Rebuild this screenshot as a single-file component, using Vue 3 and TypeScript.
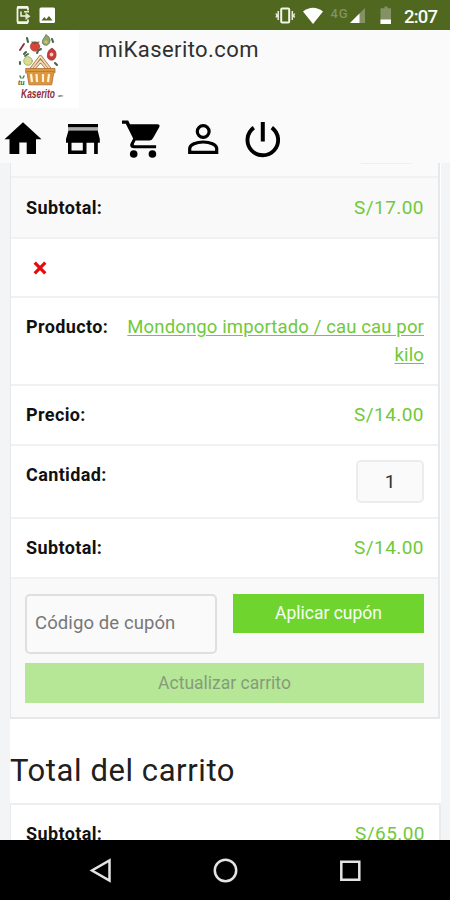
<script setup lang="ts">
interface CartRow {
  label: string
  value: string
  kind: 'price' | 'link' | 'qty' | 'remove'
  size: string
}

const rows: CartRow[] = [
  { label: 'Subtotal:', value: 'S/17.00', kind: 'price', size: 'shaded' },
  { label: '', value: '×', kind: 'remove', size: 'remove-row' },
  { label: 'Producto:', value: 'Mondongo importado / cau cau por kilo', kind: 'link', size: 'product' },
  { label: 'Precio:', value: 'S/14.00', kind: 'price', size: 'regular' },
  { label: 'Cantidad:', value: '1', kind: 'qty', size: 'quantity' },
  { label: 'Subtotal:', value: 'S/14.00', kind: 'price', size: 'regular' },
]
</script>

<template>
  <div class="screen">
    <div class="status">
      <svg width="60" height="30" viewBox="0 0 60 30">
        <rect x="17.500" y="7" width="10.500" height="16" rx="1.500" fill="none" stroke="#f4f6e8" stroke-width="1.800" />
        <path d="M17 7.500h11M17 22.500h11" stroke="#f4f6e8" stroke-width="2.600" />
        <path d="M26 10.500v9h4v-9z" fill="#506720" />
        <path d="M21 11.500v4.500h5" fill="none" stroke="#f4f6e8" stroke-width="1.500" />
        <path d="M25.500 12.500l5 3.800-5 3.700zM24 11h5v1.500h-5z" fill="#e4e8d5" />
        <path fill="#fff" fill-rule="evenodd" d="M41 7.500h12.500q1.500 0 1.500 1.500v12.500q0 1.500-1.500 1.500H41q-1.500 0-1.500-1.500V9q0-1.500 1.500-1.500zM41.500 20.500h11l-3.500-4.500-2.700 3.200-2-2.200z" />
      </svg>
      <div class="status-right">
        <svg width="170" height="30" viewBox="270 0 170 30">
          <rect x="281.200" y="8.500" width="8" height="14" rx="1" fill="none" stroke="#f2f5e9" stroke-width="2" />
          <path d="M278.200 11v9M276 13.500l1 2-1 2M292.300 11v9M294.600 13.500l-1 2 1 2" fill="none" stroke="#e9eddd" stroke-width="1.500" />
          <path d="M303 11.500Q313 4 323 11.500L313 24z" fill="#fff" />
          <text x="330.500" y="17.500" class="network" textLength="17">4G</text>
          <path d="M365 8v15h-15z" fill="#839164" />
          <path d="M359.500 13.500V23H350z" fill="#fff" />
          <path d="M382.500 8.200h2V6.500h3v1.700h3.500V24h-10.500V8.200z" fill="#839164" />
          <path d="M380.500 19.500H391V24h-10.500z" fill="#fff" />
          <text x="404" y="22.500" class="clock" textLength="34">2:07</text>
        </svg>
      </div>
    </div>

    <header class="header">
      <div class="brand">
        <div class="logo">
          <svg width="79" height="78" viewBox="0 30 79 78">
            <g stroke-linecap="round" stroke-linejoin="round">
              <path d="M24 44l-4 6" stroke="#8b3340" stroke-width="1.900" />
              <path d="M27 38l1 4M52 39l1 3M39 50l2-1M26 52l-2 2M20 62v2M55 63l2 2M37 53l1-2" stroke="#44684a" stroke-width="2.100" />
              <circle cx="35" cy="46.500" r="4.700" fill="#d8433c" stroke="#a34738" stroke-width=".7" />
              <path d="M32 42l3 1.500 4-1.500" fill="none" stroke="#48663f" stroke-width="1.200" />
              <path d="M46 35c-2 3-5 6-3 9 3 3 7 0 7-3 0-3-1-5-4-6z" fill="#94a76a" stroke="#5d7450" stroke-width=".8" />
              <circle cx="46" cy="42" r="1.700" fill="#d3bf76" />
              <path d="M52 48.500c-4 1-5 5-4.500 9 2 4 7 3 8 0 1.500-4 0-8-3.500-9z" fill="#c9393a" stroke="#8f3d3c" stroke-width=".8" />
              <circle cx="51.500" cy="54.500" r="1.900" fill="#f3c9b3" />
              <circle cx="28" cy="61" r="4.300" fill="#d9dc92" stroke="#96a85b" stroke-width=".8" />
              <path d="M25 56l3-2" fill="none" stroke="#4d7143" stroke-width="2" />
              <path d="M31 69l9.500-12.500L50 69M34.500 68l6-7 6 7" fill="none" stroke="#a8774f" stroke-width="3.200" />
              <path d="M31 69l9.500-12.500L50 69M34.500 68l6-7 6 7" fill="none" stroke="#f1ddb6" stroke-width="1.700" />
              <path d="M26 68.500h29v4.300h-1.300l-2 12H29l-2-12h-1z" fill="#dc963e" stroke="#ae6b2d" stroke-width=".8" />
              <path d="M31 74l1 8M36.500 74l.5 8M43 74v8M49 74l-1 8" stroke="#fff0d8" stroke-width="2.200" stroke-linecap="butt" />
              <path d="M27 71.500h27" stroke="#b9722e" stroke-width=".8" />
              <path d="M20 76l1 2M24 76l-1 2" stroke="#527c58" stroke-width="1.500" />
            </g>
            <text x="18" y="84.500" class="logo-small">tu</text>
            <text x="21" y="97.500" class="logo-name" textLength="34" lengthAdjust="spacingAndGlyphs">Kaserito</text>
            <text x="58" y="97" class="logo-domain" textLength="5">.com</text>
          </svg>
        </div>
        <div class="title">miKaserito.com</div>
      </div>
      <nav>
        <svg width="300" height="50" viewBox="0 115 300 50">
          <path d="M4.500 139.200L23 122.300l18.500 16.900H36V154H26.700V142.500h-7.400V154H9.500v-14.800z" />
          <path d="M68 124h30v3.500H68z" />
          <path fill="#a9aaa9" d="M68 127.500h30v3H68z" />
          <path fill-rule="evenodd" d="M68.500 130.500h29.200l2.100 8.500v3.700h-2V154h-3.700v-11.300h-7.600V154H68v-11.300h-2V139zM71.500 142.700v7.800h11.300v-7.800z" />
          <path d="M122 120.500h6.200l1.800 3.700h27.300q3.200 0 1.900 3l-6.400 11.400q-1.100 2-3.400 2h-13.800l-1.800 3.400q-.2 1.200.8 1.200h21.500v3H133.800c-3.300 0-4.400-2.800-3-5.200l2.400-4.600-7.400-14.700H122z" />
          <circle cx="133.700" cy="154" r="3.800" />
          <circle cx="152.400" cy="154" r="3.800" />
          <g fill="none" stroke="#000" stroke-width="3.200">
            <circle cx="203.200" cy="131.500" r="5.900" />
            <path d="M189.700 152.400v-3.900c0-4.200 7-6.500 13.500-6.500s13.500 2.300 13.500 6.500v3.900z" />
            <path d="M262.800 122v19.500" stroke-width="4" />
            <path d="M253.800 127.600a15.300 15.300 0 1 0 18 0" stroke-width="3.900" />
          </g>
        </svg>
      </nav>
    </header>

    <main class="content">
      <div class="page">
        <section class="cart">
          <div class="previous"><span class="previous-field"></span></div>
          <div v-for="(row, index) in rows" :key="index" class="row" :class="row.size">
            <span v-if="row.label" class="label">{{ row.label }}</span>
            <button v-if="row.kind === 'remove'" class="remove" aria-label="Eliminar">
              <svg width="14" height="14" viewBox="0 0 14 14"><path d="M1.700 1.700l10.600 10.600M12.300 1.700L1.700 12.300" stroke="#e60b0b" stroke-width="3.200" /></svg>
            </button>
            <span v-else :class="row.kind">{{ row.value }}</span>
          </div>
          <div class="actions">
            <div class="coupon">
              <input type="text" placeholder="Código de cupón" />
              <button class="button">Aplicar cupón</button>
            </div>
            <button class="button update" disabled>Actualizar carrito</button>
          </div>
        </section>
        <h2>Total del carrito</h2>
        <section class="totals">
          <span class="label">Subtotal:</span>
          <span class="price">S/65.00</span>
        </section>
      </div>
    </main>

    <footer class="navbar">
      <svg width="450" height="60" viewBox="0 840 450 60" fill="none" stroke="#e4e4e4" stroke-width="2.500">
        <path d="M109.500 860.500v20L92 870.500z" />
        <circle cx="225.500" cy="870.500" r="10.700" />
        <path d="M341.300 861.700h18v18h-18z" />
      </svg>
    </footer>
  </div>
</template>

<style>
body { margin: 0; }
</style>

<style scoped>
* { box-sizing: border-box; }
.screen { width: 450px; height: 900px; display: flex; flex-direction: column; overflow: hidden; font-family: Roboto, sans-serif; background: #f2f4f6; color: #111; }
svg { display: block; flex: none; }
.status { height: 30px; flex: none; display: flex; justify-content: space-between; background: #506720; }
.status-right { padding-right: 10px; }
.network { font: 500 13px Roboto, sans-serif; fill: #839164; }
.clock { font: 500 18.500px Roboto, sans-serif; fill: #fafbf4; }
.header { height: 133px; flex: none; background: #fafafa; }
.brand { display: flex; height: 85px; }
.logo { width: 79px; height: 78px; background: #fff; }
.logo-small { font: italic 700 8px "Liberation Serif", serif; fill: #3c6843; }
.logo-name { font: italic 700 13px "Liberation Sans", sans-serif; fill: #942b3b; }
.logo-domain { font: italic 4px "Liberation Sans", sans-serif; fill: #4c6850; }
.title { padding: 6px 0 0 19px; font-size: 22px; line-height: 27px; letter-spacing: .43px; color: #303030; }
.content { flex: 1; min-height: 0; overflow: hidden; padding: 0 9px 0 10px; }
.page { background: #fff; }
.cart { width: 430px; height: 556px; border: solid #e6e8ea; border-width: 0 2px 2px 1px; background: #fff; }
.previous { height: 15px; display: flex; justify-content: flex-end; background: #fafafa; border-bottom: 2px solid #f0f1f2; padding-right: 27px; }
.previous-field { width: 50px; height: 0; border-top: 1px solid #eeeff0; }
.row { display: flex; justify-content: space-between; align-items: flex-start; padding: 15px 14px 0 15px; border-bottom: 2px solid #f0f1f2; line-height: 28px; font-size: 18px; }
.label { flex: none; font-size: 18px; font-weight: 700; letter-spacing: .38px; color: #111; }
.price, .link { color: #70c93b; font-size: 19px; letter-spacing: .45px; }
.shaded { height: 61px; padding-top: 16px; background: #f9f9f9; }
.remove-row { height: 59px; }
.product { height: 88px; }
.regular { height: 60px; }
.quantity { height: 73px; }
.row .link { width: 302px; font-size: 18.500px; letter-spacing: .14px; text-align: right; text-decoration: underline; text-underline-offset: 2px; }
.remove { margin: 7px 0 0 7px; padding: 0; border: 0; background: none; }
.qty { width: 68px; height: 43px; margin-top: -1px; border: 2px solid #ececee; border-radius: 5px; background: #fafafa; color: #333; text-align: center; font-size: 19px; line-height: 39px; }
.actions { height: 138px; padding: 15px 14px 0; background: #f9f9f9; }
.coupon { height: 69px; display: flex; justify-content: space-between; align-items: flex-start; }
.coupon input { width: 192px; height: 60px; padding: 0 8px 2px; border: 2px solid #dedfe0; border-radius: 5px; background: #fafafa; font: 18.500px Roboto, sans-serif; letter-spacing: .1px; outline: 0; }
.coupon input::placeholder { color: #777; opacity: 1; }
.button { width: 191px; height: 39px; padding: 0; border: 0; border-radius: 0; background: #70d42e; color: #f9fff5; font: 17.500px/39px Roboto, sans-serif; letter-spacing: 0; }
.update { width: 399px; height: 40px; display: block; background: #b6e797; color: #859c7a; }
h2 { height: 86px; margin: 0; padding: 33px 0 0; border-bottom: 2px solid #eceef0; font-size: 31px; line-height: 38px; font-weight: 400; letter-spacing: .58px; color: #202020; }
.totals { width: 431px; height: 60px; display: flex; justify-content: space-between; padding: 15px 14px 0 15px; border: solid #e8eaec; border-width: 0 2px 0 1px; line-height: 28px; }
.navbar { height: 60px; flex: none; background: #000; }
</style>
